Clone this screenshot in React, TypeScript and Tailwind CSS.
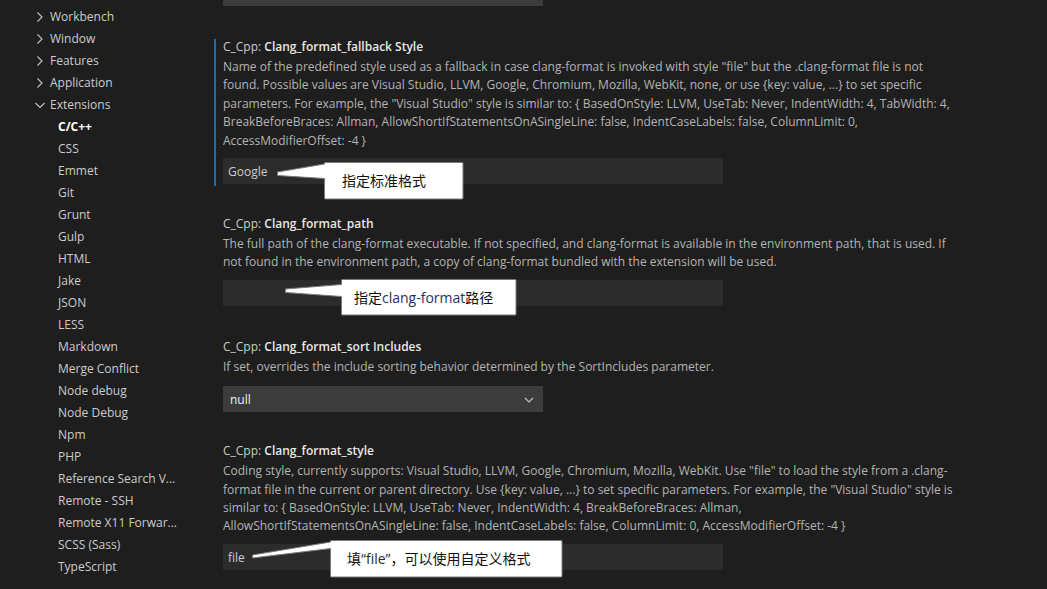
import React from "react";

// VS Code settings editor – C/C++ clang-format section with annotation callouts

type TreeItem = { label: string; level: 0 | 1; open?: boolean; active?: boolean };

const TREE: TreeItem[] = [
  { label: "Workbench", level: 0 },
  { label: "Window", level: 0 },
  { label: "Features", level: 0 },
  { label: "Application", level: 0 },
  { label: "Extensions", level: 0, open: true },
  { label: "C/C++", level: 1, active: true },
  { label: "CSS", level: 1 },
  { label: "Emmet", level: 1 },
  { label: "Git", level: 1 },
  { label: "Grunt", level: 1 },
  { label: "Gulp", level: 1 },
  { label: "HTML", level: 1 },
  { label: "Jake", level: 1 },
  { label: "JSON", level: 1 },
  { label: "LESS", level: 1 },
  { label: "Markdown", level: 1 },
  { label: "Merge Conflict", level: 1 },
  { label: "Node debug", level: 1 },
  { label: "Node Debug", level: 1 },
  { label: "Npm", level: 1 },
  { label: "PHP", level: 1 },
  { label: "Reference Search V...", level: 1 },
  { label: "Remote - SSH", level: 1 },
  { label: "Remote X11 Forwar...", level: 1 },
  { label: "SCSS (Sass)", level: 1 },
  { label: "TypeScript", level: 1 },
];

type Setting = {
  name: string;
  lines: string[];
  control: "text" | "select";
  value: string;
  focused?: boolean;
  gap: string;
};

const SETTINGS: Setting[] = [
  {
    name: "Clang_format_fallback Style",
    focused: true,
    control: "text",
    value: "Google",
    gap: "mt-[31px]",
    lines: [
      'Name of the predefined style used as a fallback in case clang-format is invoked with style "file" but the .clang-format file is not',
      "found. Possible values are Visual Studio, LLVM, Google, Chromium, Mozilla, WebKit, none, or use {key: value, ...} to set specific",
      'parameters. For example, the "Visual Studio" style is similar to: { BasedOnStyle: LLVM, UseTab: Never, IndentWidth: 4, TabWidth: 4,',
      "BreakBeforeBraces: Allman, AllowShortIfStatementsOnASingleLine: false, IndentCaseLabels: false, ColumnLimit: 0,",
      "AccessModifierOffset: -4 }",
    ],
  },
  {
    name: "Clang_format_path",
    control: "text",
    value: "",
    gap: "mt-[30px]",
    lines: [
      "The full path of the clang-format executable. If not specified, and clang-format is available in the environment path, that is used. If",
      "not found in the environment path, a copy of clang-format bundled with the extension will be used.",
    ],
  },
  {
    name: "Clang_format_sort Includes",
    control: "select",
    value: "null",
    gap: "mt-[31px]",
    lines: ["If set, overrides the include sorting behavior determined by the SortIncludes parameter."],
  },
  {
    name: "Clang_format_style",
    control: "text",
    value: "file",
    gap: "mt-[29px]",
    lines: [
      'Coding style, currently supports: Visual Studio, LLVM, Google, Chromium, Mozilla, WebKit. Use "file" to load the style from a .clang-',
      'format file in the current or parent directory. Use {key: value, ...} to set specific parameters. For example, the "Visual Studio" style is',
      "similar to: { BasedOnStyle: LLVM, UseTab: Never, IndentWidth: 4, BreakBeforeBraces: Allman,",
      "AllowShortIfStatementsOnASingleLine: false, IndentCaseLabels: false, ColumnLimit: 0, AccessModifierOffset: -4 }",
    ],
  },
];

function Chevron({ open }: { open?: boolean }) {
  if (open) {
    return (
      <svg width="12" height="8" viewBox="0 0 12 8" className="text-[#c5c5c5]">
        <path d="M1.5 2 L6 6.5 L10.5 2" fill="none" stroke="currentColor" strokeWidth="1.1" />
      </svg>
    );
  }
  return (
    <svg width="8" height="12" viewBox="0 0 8 12" className="text-[#c5c5c5]">
      <path d="M1.5 1.5 L6 6 L1.5 10.5" fill="none" stroke="currentColor" strokeWidth="1.1" />
    </svg>
  );
}

function Sidebar() {
  return (
    <aside className="w-[214px] shrink-0 pt-[6px]">
      {TREE.map((item) => (
        <div key={item.label} className="h-[22px] flex items-center whitespace-nowrap">
          {item.level === 0 ? (
            <div className="flex items-center pl-[34px]">
              <span className="w-[16px] flex justify-start items-center">
                {item.open ? <Chevron open /> : <span className="pl-[2px] flex"><Chevron /></span>}
              </span>
              <span className="text-[#cccccc]">{item.label}</span>
            </div>
          ) : (
            <span
              className={
                item.active
                  ? "pl-[58px] text-white font-bold"
                  : "pl-[58px] text-[#cccccc]"
              }
            >
              {item.label}
            </span>
          )}
        </div>
      ))}
    </aside>
  );
}

function SettingBlock({ s }: { s: Setting }) {
  return (
    <section
      className={`${s.gap} border-l-2 pl-[7px] pb-[2px] ${
        s.focused ? "border-[#1b6ca8]" : "border-transparent"
      }`}
    >
      <div className="leading-[15px] whitespace-nowrap">
        <span className="text-[#cccccc]">C_Cpp: </span>
        <span className="font-semibold text-[#e8e8e8]">{s.name}</span>
      </div>
      <div className="mt-[4px] text-[#b4b4b4] leading-[18.4px]">
        {s.lines.map((l, i) => (
          <div key={i} className="whitespace-nowrap">
            {l}
          </div>
        ))}
      </div>
      {s.control === "text" ? (
        <div className="mt-[8px] h-[26px] w-[500px] bg-[#2c2c2c] pl-[5px] pt-[2px] flex items-center text-[#cccccc]">
          {s.value}
        </div>
      ) : (
        <div className="mt-[10px] h-[26px] w-[320px] bg-[#3c3c3c] pl-[7px] pr-[9px] pt-[1px] flex items-center justify-between text-[#f0f0f0]">
          <span>{s.value}</span>
          <svg width="10" height="6" viewBox="0 0 10 6">
            <path d="M1 1 L5 5 L9 1" fill="none" stroke="#c5c5c5" strokeWidth="1.1" />
          </svg>
        </div>
      )}
    </section>
  );
}

// callout shapes in page coordinates (box + thin pointer wedge)
const CALLOUTS = [
  {
    d: "M277.5 172 L324.5 164 L324.5 163.5 Q324.5 162.5 325.5 162.5 L462 162.5 Q463 162.5 463 163.5 L463 198 Q463 199 462 199 L325.5 199 Q324.5 199 324.5 198 L324.5 178.5 L277.5 175.5 Z",
    box: { left: 324, top: 162, w: 139, h: 37, pl: 18 },
    text: <>指定标准格式</>,
  },
  {
    d: "M285.5 289 L341.5 284.5 L341.5 280.5 Q341.5 279.5 342.5 279.5 L515 279.5 Q516 279.5 516 280.5 L516 314 Q516 315 515 315 L342.5 315 Q341.5 315 341.5 314 L341.5 296.5 L285.5 292.5 Z",
    box: { left: 341, top: 279, w: 175, h: 36, pl: 13 },
    text: (
      <>
        指定<span className="text-[#1d3557]">clang-format</span>路径
      </>
    ),
  },
  {
    d: "M252.5 555 L330.5 542 L330.5 541.5 Q330.5 540.5 331.5 540.5 L561 540.5 Q562 540.5 562 541.5 L562 576 Q562 577 561 577 L331.5 577 Q330.5 577 330.5 576 L330.5 548.5 L252.5 558 Z",
    box: { left: 330, top: 540, w: 232, h: 37, pl: 17 },
    text: (
      <>
        填<span className="text-[#2a2a2a]">“file”</span>，可以使用自定义格式
      </>
    ),
  },
];

function Callouts() {
  return (
    <>
      <svg
        className="absolute inset-0 pointer-events-none"
        width="1047"
        height="589"
        viewBox="0 0 1047 589"
      >
        {CALLOUTS.map((c, i) => (
          <path key={i} d={c.d} fill="#ffffff" stroke="#7a7a7a" strokeWidth="1" strokeLinejoin="round" />
        ))}
      </svg>
      {CALLOUTS.map((c, i) => (
        <div
          key={i}
          className="absolute flex items-center text-[14px] text-[#111111] whitespace-nowrap font-['Open_Sans','Noto_Sans_CJK_SC',sans-serif]"
          style={{ left: c.box.left, top: c.box.top, width: c.box.w, height: c.box.h, paddingLeft: c.box.pl }}
        >
          {c.text}
        </div>
      ))}
    </>
  );
}

export default function App() {
  return (
    <div className="relative w-[1047px] h-[589px] overflow-hidden bg-[#1e1e1e] flex text-[12px] font-['Open_Sans','Noto_Sans_CJK_SC',sans-serif]">
      <Sidebar />
      <main className="flex-1 min-w-0">
        {/* tail of the previous setting's dropdown, scrolled off the top */}
        <div className="-mt-[20px] pl-[9px] pb-[2px]">
          <div className="h-[26px] w-[320px] bg-[#3c3c3c]" />
        </div>
        {SETTINGS.map((s) => (
          <SettingBlock key={s.name} s={s} />
        ))}
      </main>
      <Callouts />
    </div>
  );
}
